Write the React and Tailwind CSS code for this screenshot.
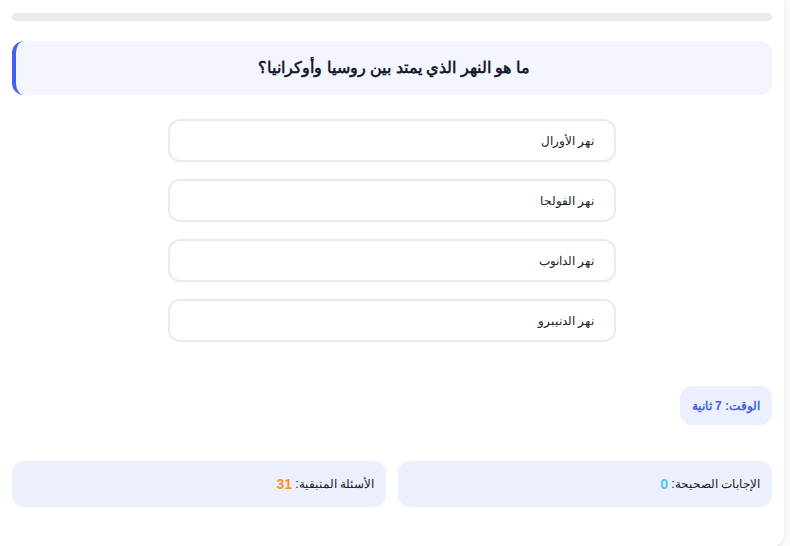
import React from "react";

const options = ["نهر الأورال", "نهر الفولجا", "نهر الدانوب", "نهر الدنيبرو"];

export default function App() {
  return (
    <div
      className="min-h-screen bg-[#fafafa]"
      style={{ fontFamily: '"Liberation Sans", Arial, sans-serif' }}
    >
      <div
        dir="rtl"
        className="w-[784px] min-h-[546px] bg-white rounded-br-xl shadow-sm px-3 pt-[13px] pb-10"
      >
        {/* progress */}
        <div className="h-2 w-full rounded-full bg-[#e8ebef]" />

        {/* question */}
        <div className="mt-5 h-[54px] rounded-xl border-l-4 border-[#4361ee] bg-[#f3f6fe] flex items-center justify-center">
          <h2 className="text-[16px] font-bold text-[#1a1a2e]">
            ما هو النهر الذي يمتد بين روسيا وأوكرانيا؟
          </h2>
        </div>

        {/* options */}
        <div className="mt-6 mx-auto w-[448px] flex flex-col gap-[17px]">
          {options.map((o) => (
            <button
              key={o}
              className="h-[43px] w-full rounded-xl border-2 border-[#e8eaee] bg-white px-5 text-right text-[12px] text-[#222]"
            >
              {o}
            </button>
          ))}
        </div>

        {/* timer */}
        <div className="mt-11 flex">
          <div className="h-[39px] px-3 rounded-xl bg-[#eceffd] flex items-center text-[12px] font-bold text-[#4361ee]">
            الوقت: 7 ثانية
          </div>
        </div>

        {/* stats */}
        <div className="mt-9 grid grid-cols-2 gap-3">
          <div className="h-[46px] rounded-xl bg-[#eceffd] flex items-center px-3 text-[12px] text-[#222]">
            الإجابات الصحيحة:&nbsp;<span className="font-bold text-[14px] text-[#4cc9f0]">0</span>
          </div>
          <div className="h-[46px] rounded-xl bg-[#eceffd] flex items-center px-3 text-[12px] text-[#222]">
            الأسئلة المتبقية:&nbsp;<span className="font-bold text-[14px] text-[#f8961e]">31</span>
          </div>
        </div>
      </div>
    </div>
  );
}
